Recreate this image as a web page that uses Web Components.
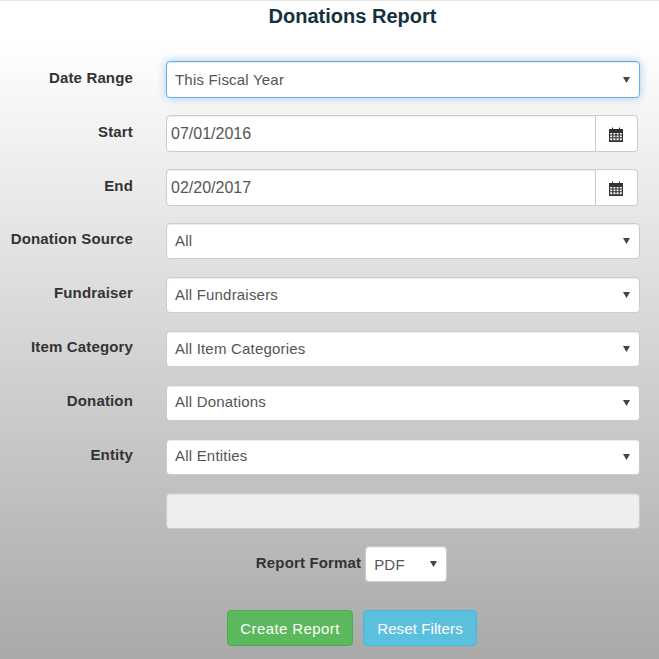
<!DOCTYPE html>
<html lang="en">
<head>
<meta charset="UTF-8">
<title>Donations Report</title>
<style>
  html, body { margin: 0; height: 659px; overflow: hidden; }
  body {
    border-top: 1px solid #e7e7e7;
    box-sizing: border-box;
    background: linear-gradient(to bottom, #fff 0, #fff 40px, #a9a9a9 659px);
    font-family: "Liberation Sans", Arial, sans-serif;
    color: #333;
  }
</style>
</head>
<body>
<report-form title="Donations Report">
  <form-row label="Date Range" style="--label-top:7px"><select-box focused>This Fiscal Year</select-box></form-row>
  <form-row label="Start" style="--label-top:7px"><date-box>07/01/2016</date-box></form-row>
  <form-row label="End" style="--label-top:7px"><date-box>02/20/2017</date-box></form-row>
  <form-row label="Donation Source"><select-box nudge="1">All</select-box></form-row>
  <form-row label="Fundraiser"><select-box nudge="1">All Fundraisers</select-box></form-row>
  <form-row label="Item Category"><select-box nudge="1">All Item Categories</select-box></form-row>
  <form-row label="Donation"><select-box nudge="2">All Donations</select-box></form-row>
  <form-row label="Entity"><select-box nudge="2">All Entities</select-box></form-row>
  <form-row label=""><select-box disabled></select-box></form-row>
  <format-row label="Report Format" slot="footer"><select-box>PDF</select-box></format-row>
  <action-bar slot="footer">
    <report-button kind="success">Create Report</report-button>
    <report-button kind="info">Reset Filters</report-button>
  </action-bar>
</report-form>

<script>
  const ARROW = `<svg width="7" height="6" viewBox="0 0 7 6"><path d="M0 0h7L3.5 6z" fill="#444"/></svg>`;

  class ReportForm extends HTMLElement {
    constructor() {
      super();
      this.attachShadow({mode: "open"});
      this.shadowRoot.innerHTML = `
        <style>
          :host { display: block; }
          h1 {
            margin: 0;
            padding-top: 5px;
            height: 60px;
            box-sizing: border-box;
            text-align: center;
            font-size: 20px;
            line-height: 20px;
            font-weight: bold;
            color: #14313d;
            padding-left: 46px;
          }
          .rows { display: flex; flex-direction: column; gap: 17px; }
        </style>
        <h1>${this.getAttribute("title")}</h1>
        <div class="rows"><slot></slot></div>
        <slot name="footer"></slot>`;
    }
  }

  class FormRow extends HTMLElement {
    constructor() {
      super();
      this.attachShadow({mode: "open"});
      this.shadowRoot.innerHTML = `
        <style>
          :host { display: grid; grid-template-columns: 133px 1fr; column-gap: 33px; padding-right: 19px; height: 37px; }
          label {
            text-align: right;
            font-size: 15px;
            font-weight: bold;
            letter-spacing: .15px;
            line-height: 20px;
            padding-top: var(--label-top, 6px);
            color: #333;
            white-space: nowrap;
          }
        </style>
        <label>${this.getAttribute("label")}</label>
        <slot></slot>`;
    }
  }

  class FormatRow extends HTMLElement {
    constructor() {
      super();
      this.attachShadow({mode: "open"});
      this.shadowRoot.innerHTML = `
        <style>
          :host { display: flex; justify-content: center; gap: 4px; margin-top: 16px; padding-left: 44px; }
          label { font-size: 15px; font-weight: bold; letter-spacing: .15px; line-height: 20px; padding-top: 7px; color: #333; }
          ::slotted(select-box) { width: 82px; }
        </style>
        <label>${this.getAttribute("label")}</label>
        <slot></slot>`;
    }
  }

  class SelectBox extends HTMLElement {
    constructor() {
      super();
      this.attachShadow({mode: "open"});
      this.shadowRoot.innerHTML = `
        <style>
          :host {
            display: flex;
            align-items: center;
            justify-content: space-between;
            box-sizing: border-box;
            height: 36px;
            padding: 0 9px 0 8px;
            background: #fff;
            border: 1px solid #ccc;
            border-radius: 4px;
            font-size: 15px;
            letter-spacing: .2px;
            color: #555;
            box-shadow: inset 0 1px 1px rgba(0,0,0,.075);
          }
          :host([focused]) {
            border-color: #66afe9;
            box-shadow: inset 0 1px 1px rgba(0,0,0,.075), 0 0 8px rgba(102,175,233,.6);
            height: 37px;
          }
          :host([disabled]) { background: #eee; }
          :host([disabled]) svg { display: none; }
          :host([nudge="1"]) span { position: relative; top: -1px; }
          :host([nudge="2"]) span { position: relative; top: -2px; }
          svg { flex: none; }
        </style>
        <span><slot></slot></span>${ARROW}`;
    }
  }

  class DateBox extends HTMLElement {
    constructor() {
      super();
      this.attachShadow({mode: "open"});
      this.shadowRoot.innerHTML = `
        <style>
          :host { display: flex; height: 37px; margin-right: 2px; font-size: 16px; color: #555; }
          .field {
            flex: 1;
            display: flex;
            align-items: center;
            padding-left: 4px;
            background: #fff;
            border: 1px solid #ccc;
            border-radius: 4px 0 0 4px;
            box-shadow: inset 0 1px 1px rgba(0,0,0,.075);
          }
          .addon {
            flex: none;
            width: 42px;
            box-sizing: border-box;
            display: flex;
            align-items: center;
            justify-content: center;
            padding-right: 2px;
            background: #fff;
            border: 1px solid #ccc;
            border-left: 0;
            border-radius: 0 4px 4px 0;
          }
          svg { margin-top: 1px; }
        </style>
        <div class="field"><slot></slot></div>
        <div class="addon">
          <svg width="14" height="15" viewBox="0 0 14 15">
            <path fill="#333" fill-rule="evenodd" d="M0 2h3V0.6h1V2h6V0.6h1V2h3v13H0zM1.2 6v1.6h2V6zM4.4 6v1.6h2V6zM7.6 6v1.6h2V6zM10.8 6v1.6h2V6zM1.2 8.6v1.6h2V8.6zM4.4 8.6v1.6h2V8.6zM7.6 8.6v1.6h2V8.6zM10.8 8.6v1.6h2V8.6zM1.2 11.2v2h2v-2zM4.4 11.2v2h2v-2zM7.6 11.2v2h2v-2zM10.8 11.2v2h2v-2z"/>
          </svg>
        </div>`;
    }
  }

  class ActionBar extends HTMLElement {
    constructor() {
      super();
      this.attachShadow({mode: "open"});
      this.shadowRoot.innerHTML = `
        <style>
          :host { display: flex; justify-content: center; gap: 10px; margin-top: 28px; padding-left: 45px; }
        </style>
        <slot></slot>`;
    }
  }

  class ReportButton extends HTMLElement {
    constructor() {
      super();
      this.attachShadow({mode: "open"});
      this.shadowRoot.innerHTML = `
        <style>
          :host {
            display: flex;
            align-items: center;
            justify-content: center;
            box-sizing: border-box;
            height: 36px;
            border: 1px solid;
            border-radius: 4px;
            font-size: 15px;
            color: #fff;
            cursor: pointer;
          }
          :host([kind="success"]) { width: 126px; letter-spacing: .4px; background: #5cb85c; border-color: #4cae4c; }
          :host([kind="info"]) { width: 114px; letter-spacing: .1px; background: #5bc0de; border-color: #46b8da; }
        </style>
        <slot></slot>`;
    }
  }

  customElements.define("report-form", ReportForm);
  customElements.define("form-row", FormRow);
  customElements.define("format-row", FormatRow);
  customElements.define("select-box", SelectBox);
  customElements.define("date-box", DateBox);
  customElements.define("action-bar", ActionBar);
  customElements.define("report-button", ReportButton);
</script>
</body>
</html>
